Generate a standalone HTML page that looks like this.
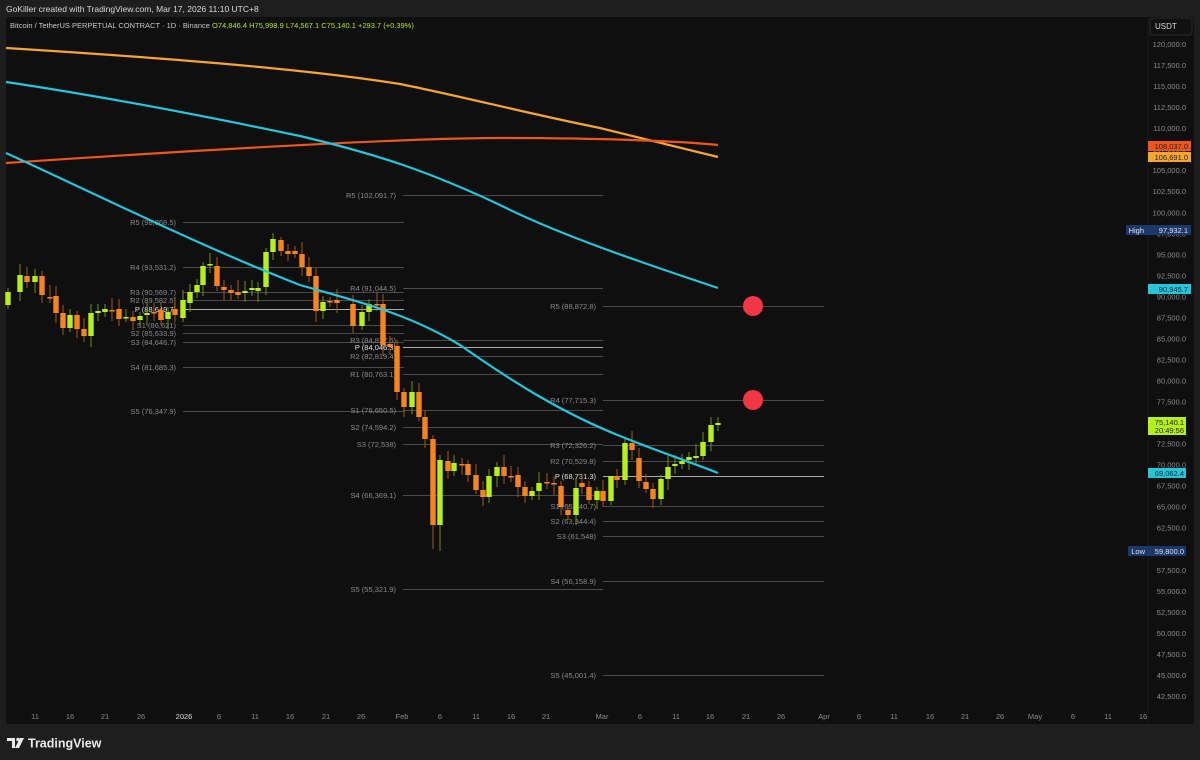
<!DOCTYPE html>
<html><head><meta charset="utf-8"><style>
html,body{margin:0;padding:0;background:#1e1e1e;width:1200px;height:760px;overflow:hidden;font-family:"Liberation Sans",sans-serif}
</style></head><body>
<svg id="s" width="1200" height="760" xmlns="http://www.w3.org/2000/svg" font-family="Liberation Sans, sans-serif">
<rect width="1200" height="760" fill="#1e1e1e"/>
<text x="6" y="12" fill="#d8d8d8" font-size="8.5">GoKiller created with TradingView.com, Mar 17, 2026 11:10 UTC+8</text>
<rect x="6" y="17" width="1188" height="707" rx="3" fill="#0f0f0f"/>
<line x1="1148" y1="17" x2="1148" y2="724" stroke="#1a1a1a"/>
<text x="10" y="28" fill="#c8c8c8" font-size="7.5">Bitcoin / TetherUS PERPETUAL CONTRACT · 1D · Binance <tspan fill="#b5e61d">O74,846.4  H75,998.9  L74,567.1  C75,140.1  +293.7 (+0.39%)</tspan></text>
<g id="piv" stroke="#555" stroke-width="1"></g>
<g id="pivt" fill="#8a8a8a" font-size="7.5" text-anchor="end"></g>
<g id="cnd"></g>
<g fill="none" stroke-width="2.2">
<path d="M6,48 C150,57 300,68 400,84 C460,96 530,114 600,128 C650,140 690,150 718,157" stroke="#f7a531"/>
<path d="M6,163 C200,150 400,138 500,138 C600,138 680,141 718,145" stroke="#f0561a"/>
<path d="M6,82 C100,96 200,115 300,136 C380,155 430,172 500,205 C560,235 640,262 718,288" stroke="#26c6da"/>
<path d="M6,153 C100,196 200,246 300,285 C370,305 410,315 460,345 C510,380 560,412 620,436 C660,452 690,462 718,473" stroke="#26c6da"/>
</g>
<circle cx="753" cy="306" r="10" fill="#f23645"/>
<circle cx="753" cy="400" r="10" fill="#f23645"/>
<rect x="1150" y="18" width="42" height="17" rx="2" fill="#111" stroke="#2a2a2a"/>
<text x="1155" y="29" fill="#d8d8d8" font-size="8">USDT</text>
<g id="ax" fill="#8c8c8c" font-size="7.5" text-anchor="end"></g>
<g font-size="7.5" text-anchor="end">
<rect x="1148" y="141" width="43" height="10" fill="#f0561a"/><text x="1188" y="149" fill="#222">108,037.0</text>
<rect x="1148" y="152" width="43" height="10" fill="#f7a531"/><text x="1188" y="160" fill="#222">106,691.0</text>
<rect x="1126" y="225" width="65" height="10" fill="#1c3768"/><text x="1188" y="233" fill="#d8e0f0">97,932.1</text><text x="1144" y="233" fill="#d8e0f0">High</text>
<rect x="1148" y="284" width="43" height="10" fill="#26c6da"/><text x="1188" y="292" fill="#123">90,945.7</text>
<rect x="1148" y="417" width="38" height="18" fill="#b5f01d"/><text x="1184" y="425" fill="#222">75,140.1</text><text x="1184" y="433" fill="#222">20:49:56</text>
<rect x="1148" y="468" width="38" height="10" fill="#26c6da"/><text x="1184" y="476" fill="#123">69,062.4</text>
<rect x="1128" y="546" width="58" height="10" fill="#1c3768"/><text x="1184" y="554" fill="#d8e0f0">59,800.0</text><text x="1145" y="554" fill="#d8e0f0">Low</text>
</g>
<g id="dx" fill="#8c8c8c" font-size="7.5" text-anchor="middle"></g>
<g transform="translate(7,737)" fill="#eaeaea">
<path d="M0,1 h8 v10 h-3 v-7 h-5z"/><circle cx="11" cy="2.5" r="1.8"/><path d="M13,1 h4 l-5,10 h-4z"/>
<text x="21" y="10.5" font-size="12.5" font-weight="bold">TradingView</text>
</g>
</svg>
<script>
const NS="http://www.w3.org/2000/svg";
function el(p,t,a,txt){const e=document.createElementNS(NS,t);for(const k in a)e.setAttribute(k,a[k]);if(txt)e.textContent=txt;document.getElementById(p).appendChild(e);}
// axis
for(let p=120000;p>=42500;p-=2500){const y=44+(120000-p)*0.0084128;el("ax","text",{x:1186,y:y+3},p.toLocaleString("en-US")+".0");}
// dates
[[35,"11"],[70,"16"],[105,"21"],[141,"26"],[184,"2026"],[219,"6"],[255,"11"],[290,"16"],[326,"21"],[361,"26"],[402,"Feb"],[440,"6"],[476,"11"],[511,"16"],[546,"21"],[602,"Mar"],[640,"6"],[676,"11"],[710,"16"],[746,"21"],[781,"26"],[824,"Apr"],[859,"6"],[894,"11"],[930,"16"],[965,"21"],[1000,"26"],[1035,"May"],[1073,"6"],[1108,"11"],[1143,"16"]].forEach(d=>el("dx","text",{x:d[0],y:719,fill:d[1]=="2026"?"#ddd":"#8c8c8c"},d[1]));
// pivots
const sets=[[183,404,176,[["R5 (98,868.5)",222],["R4 (93,531.2)",267],["R3 (90,569.7)",292],["R2 (89,582.5)",300],["P (88,649.7)",309,1],["S1 (86,621)",325],["S2 (85,633.9)",333],["S3 (84,646.7)",342],["S4 (81,685.3)",367],["S5 (76,347.9)",411]]],
[403,603,396,[["R5 (102,091.7)",195],["R4 (91,044.5)",288],["R3 (84,877.6)",340],["P (84,046.3)",347,1],["R2 (82,819.4)",356],["R1 (80,763.1)",374],["S1 (76,650.5)",410],["S2 (74,594.2)",427],["S3 (72,538)",444],["S4 (66,369.1)",495],["S5 (55,321.9)",589]]],
[603,824,596,[["R5 (88,872.8)",306],["R4 (77,715.3)",400],["R3 (72,326.2)",445],["R2 (70,529.8)",461],["P (68,731.3)",476,1],["S1 (65,140.7)",506],["S2 (63,344.4)",521],["S3 (61,548)",536],["S4 (56,158.9)",581],["S5 (45,001.4)",675]]]];
sets.forEach(s=>s[3].forEach(l=>{el("piv","line",{x1:s[0],x2:s[1],y1:l[1]+.5,y2:l[1]+.5,stroke:l[2]?"#aaa":"#4a4a4a"});el("pivt","text",{x:s[2],y:l[1]+3,fill:l[2]?"#e0e0e0":"#8a8a8a"},l[0]);}));
// candles [x, open y, close y]
const C=[[8,305,292],[20,292,275],[27,276,282],[35,282,276],[42,276,295],[50,297,298],[56,296,313],[63,313,328],[70,328,315],[77,315,329],[84,329,336],[91,336,313],[98,313,311],[105,312,309],[112,310,311],[119,309,319],[126,318,317],[133,317,321],[140,320,316],[147,315,313],[154,312,313],[161,310,320],[168,319,312],[175,309,315],[183,318,300],[190,303,292],[197,292,285],[203,285,266],[210,265,264],[217,266,286],[224,287,290],[231,290,293],[238,292,295],[245,293,291],[252,290,288],[258,291,288],[266,287,252],[273,252,239],[281,240,251],[288,251,254],[295,251,254],[302,254,267],[309,267,276],[316,276,311],[323,311,302],[330,301,302],[337,300,303],[353,304,326],[362,326,312],[369,312,304],[377,304,305],[383,304,345],[390,344,347],[397,346,392],[404,392,407],[412,407,392],[419,392,417],[425,417,439],[433,439,525],[440,525,460],[448,461,471],[454,471,463],[462,464,465],[468,464,475],[476,475,490],[483,490,497],[489,497,476],[497,476,467],[504,467,476],[511,476,477],[518,475,487],[525,487,496],[532,496,491],[539,491,483],[547,482,483],[554,483,484],[561,486,507],[568,510,515],[576,515,488],[582,483,487],[589,487,500],[597,500,491],[603,491,501],[611,501,476],[617,476,480],[625,480,443],[632,443,450],[639,458,481],[646,482,489],[653,489,499],[661,499,479],[668,479,467],[675,466,464],[682,464,461],[689,460,457],[696,458,456],[703,456,442],[711,442,425],[718,425,423]];
const spec={273:[233,260],433:[435,549],440:[455,551],281:[237,256],397:[340,400],568:[505,520],611:[480,505]};
C.forEach((c,i)=>{const g=c[2]<c[1]||(c[2]==c[1]);const col=c[2]<=c[1]?"#b5f01d":"#f7841e";const t=Math.min(c[1],c[2]),b=Math.max(c[1],c[2]);
let hi=t-4-(i*7%9),lo=b+4+(i*5%8);if(spec[c[0]]){hi=spec[c[0]][0];lo=spec[c[0]][1];}
el("cnd","line",{x1:c[0],x2:c[0],y1:hi,y2:lo,stroke:c[2]<=c[1]?"#6f8f1a":"#a05a1a","stroke-width":1});
el("cnd","rect",{x:c[0]-2.7,y:t,width:5.4,height:Math.max(1.5,b-t),fill:col});});
</script>
</body></html>
